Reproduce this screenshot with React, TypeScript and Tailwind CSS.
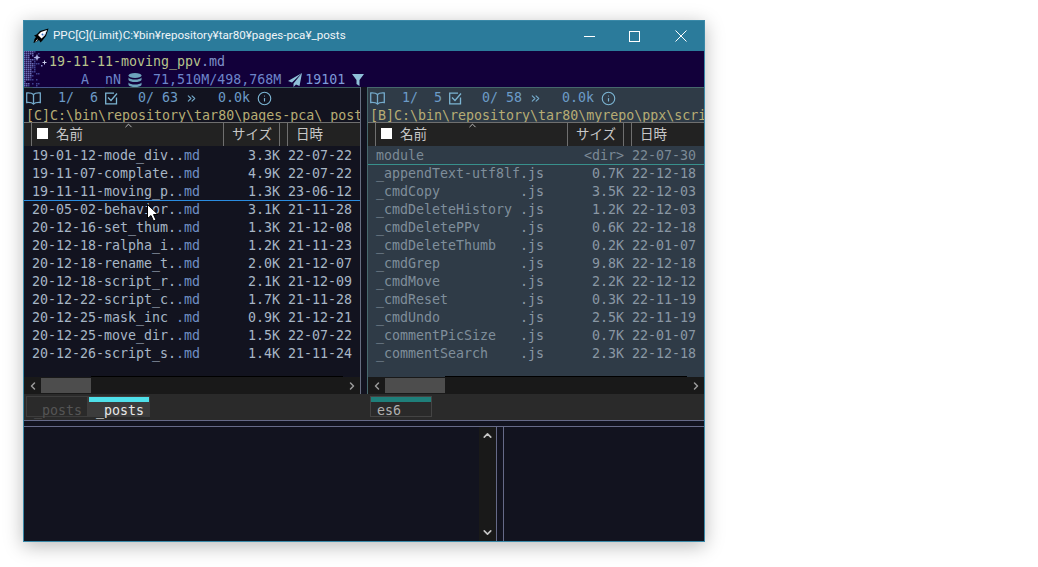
import React from "react";
import { ChevronLeft, ChevronRight, ChevronUp, ChevronDown, ChevronsRight, Info } from "lucide-react";

const mono = "font-['DejaVu_Sans_Mono','Noto_Sans_CJK_JP',monospace] text-[13.3px] leading-[18px]";

type F = [string, string, string, string];
const left: F[] = [
  ["19-01-12-mode_div..", "md", "3.3K", "22-07-22"],
  ["19-11-07-complate.", ".md", "4.9K", "22-07-22"],
  ["19-11-11-moving_p.", ".md", "1.3K", "23-06-12"],
  ["20-05-02-behavior.", ".md", "3.1K", "21-11-28"],
  ["20-12-16-set_thum.", ".md", "1.3K", "21-12-08"],
  ["20-12-18-ralpha_i.", ".md", "1.2K", "21-11-23"],
  ["20-12-18-rename_t.", ".md", "2.0K", "21-12-07"],
  ["20-12-18-script_r.", ".md", "2.1K", "21-12-09"],
  ["20-12-22-script_c.", ".md", "1.7K", "21-11-28"],
  ["20-12-25-mask_inc ", ".md", "0.9K", "21-12-21"],
  ["20-12-25-move_dir.", ".md", "1.5K", "22-07-22"],
  ["20-12-26-script_s.", ".md", "1.4K", "21-11-24"],
];
const right: F[] = [
  ["_appendText-utf8lf", ".js", "0.7K", "22-12-18"],
  ["_cmdCopy          ", ".js", "3.5K", "22-12-03"],
  ["_cmdDeleteHistory ", ".js", "1.2K", "22-12-03"],
  ["_cmdDeletePPv     ", ".js", "0.6K", "22-12-18"],
  ["_cmdDeleteThumb   ", ".js", "0.2K", "22-01-07"],
  ["_cmdGrep          ", ".js", "9.8K", "22-12-18"],
  ["_cmdMove          ", ".js", "2.2K", "22-12-12"],
  ["_cmdReset         ", ".js", "0.3K", "22-11-19"],
  ["_cmdUndo          ", ".js", "2.5K", "22-11-19"],
  ["_commentPicSize   ", ".js", "0.7K", "22-01-07"],
  ["_commentSearch    ", ".js", "2.3K", "22-12-18"],
];

function Rocket() {
  return (
    <svg width="16" height="16" viewBox="0 0 16 16" className="shrink-0">
      <path d="M15.500 .5 L7 3 L3.500 6.500 L1 7.500 L3 9 L1.500 11 L.5 15 L4 13.500 L6 12 L7.500 14.500 L9.500 12.500 L13 8Z" fill="#000" />
      <path d="M14 2 L8 4 L5 7 L8.500 10.500 L12 7Z" fill="#fff" />
      <path d="M14 2 L8.500 10.500 L12 7Z" fill="#b8d0f0" />
      <circle cx="9.500" cy="6.500" r="1" fill="#2f6fc4" />
      <path d="M2 14 L5 10.500 L4 13Z" fill="#fff" />
    </svg>
  );
}

function Dither() {
  const dots: React.ReactElement[] = [];
  for (let y = 0; y < 36; y += 2) {
    for (let x = 0; x < 20; x += 2) {
      const p = (1 - x / 16) * (1 - y / 70) * 1.5;
      const n = ((x * 7 + y * 11 + (x * y) % 7) % 10) / 10;
      if (n < p) dots.push(<rect key={x + "-" + y} x={x} y={y} width="1.500" height="1.500" fill={p > 0.6 ? "#6a6db4" : "#40428f"} />);
    }
  }
  return (
    <svg width="24" height="36" viewBox="0 0 24 36" className="absolute left-0 top-0">
      {dots}
      <path d="M13 3l1 2.500 2.500 1-2.500 1-1 2.500-1-2.500-2.500-1 2.500-1z" fill="#aeb2e4" />
      <path d="M20 9.500h1v1.500h1.500v1h-1.500v1.500h-1v-1.500h-1.500v-1h1.500z" fill="#c9cce8" />
      <rect x="17" y="14" width="1.500" height="1.500" fill="#8c8fcc" />
    </svg>
  );
}

function BookIcon() {
  return (
    <svg width="15" height="13" viewBox="0 0 15 13" fill="none" stroke="#74aacb" strokeWidth="1.300" className="ml-[2px] mr-[17px] shrink-0">
      <path d="M7.500 2.500C6 1 3.500 .8 .7 1v9.500c2.800-.2 5.300 0 6.800 1.500 1.500-1.500 4-1.700 6.800-1.500V1c-2.800-.2-5.300 0-6.800 1.500z" />
      <path d="M7.500 2.500V12" />
    </svg>
  );
}

function CheckIcon() {
  return (
    <svg width="13" height="13" viewBox="0 0 13 13" fill="none" stroke="#7cb5d3" strokeWidth="1.300" className="ml-[7px] mr-[20px] shrink-0">
      <path d="M11.500 5.500V11.900H.7V1.100H9" />
      <path d="M3 5.500l3 3 6-7" />
    </svg>
  );
}

function DbIcon() {
  return (
    <svg width="14" height="15" viewBox="0 0 14 15" fill="#6da3bc" className="ml-[7px] shrink-0">
      <ellipse cx="7" cy="2.500" rx="6.500" ry="2.500" />
      <path d="M.5 4.500C1.500 6 4 6.500 7 6.500s5.500-.5 6.500-2v2.500c-1 1.500-3.500 2-6.500 2s-5.500-.5-6.500-2z" />
      <path d="M.5 8.500C1.500 10 4 10.500 7 10.500s5.500-.5 6.500-2v2.500c-1 1.500-3.500 2-6.500 2s-5.500-.5-6.500-2z" transform="translate(0 1)" />
    </svg>
  );
}

function PlaneIcon() {
  return (
    <svg width="14" height="14" viewBox="0 0 14 14" fill="#8fc0d8" className="ml-[7px] mr-[3px] shrink-0">
      <path d="M14 0L0 8l4 1.500L14 0zM14 0L5.500 10.500v3.500l2.500-2.500 3.500 1.500z" />
    </svg>
  );
}

function FunnelIcon() {
  return (
    <svg width="12" height="12" viewBox="0 0 12 12" fill="#8fc0d8" className="ml-[7px] shrink-0">
      <path d="M0 0h12L7.500 6v6l-3-2V6z" />
    </svg>
  );
}

function Cursor() {
  return (
    <svg width="12" height="18" viewBox="0 0 12 18" className="absolute left-[123px] top-[183px]">
      <path d="M.5 .5V14.500L4 11.500L6.500 17L9 16L6.500 10.500H11Z" fill="#fff" stroke="#000" strokeWidth="1" />
    </svg>
  );
}

function Stat({ a, c, d }: { a: string; c: string; d: string }) {
  return (
    <div className={`flex h-[19px] items-center whitespace-pre pt-[1px] text-[#6c9bc7] ${mono}`}>
      <BookIcon />
      <span>{a}</span>
      <CheckIcon />
      <span>{c}</span>
      <ChevronsRight size={13} strokeWidth={2} className="ml-[7px] mr-[20px] shrink-0 text-[#74aacb]" />
      <span>{d}</span>
      <Info size={15} strokeWidth={1.8} className="ml-[7px] shrink-0 text-[#7cb5d3]" />
    </div>
  );
}

function Header() {
  return (
    <div className="relative flex h-[24px] shrink-0 border-t border-[#6f6f6f] bg-[#222222] font-['Noto_Sans_CJK_JP','Noto_Sans',sans-serif] text-[13.5px] leading-[20px] text-[#c8c8c8]">
      <div className="w-[8px] shrink-0 border-r border-[#6f6f6f]" />
      <div className="flex w-[192px] shrink-0 items-start border-r border-[#6f6f6f] pl-[5px]">
        <span className="mt-[5px] h-[11px] w-[11px] bg-white" />
        <span className="ml-[8px]">名前</span>
      </div>
      <ChevronUp size={11} className="absolute left-[99px] top-[-3px] text-[#c8c8c8]" />
      <div className="w-[56px] shrink-0 border-r border-[#6f6f6f] pl-[8px]">サイズ</div>
      <div className="w-[8px] shrink-0 border-r border-[#6f6f6f]" />
      <div className="pl-[8px]">日時</div>
    </div>
  );
}

function Row({ f, name, ext, meta, line }: { f: F; name: string; ext: string; meta: string; line?: boolean }) {
  return (
    <>
      <div className={`flex h-[18px] shrink-0 whitespace-pre pl-[8px] ${mono} ${line ? "-mb-px" : ""}`}>
        <span className={name}>{f[0]}</span>
        <span className={ext}>{f[1]}</span>
        <span className={`ml-auto w-[40px] text-right ${meta}`}>{f[2]}</span>
        <span className={`ml-[8px] mr-[8px] ${meta}`}>{f[3]}</span>
      </div>
      {line ? <div className="-my-0 h-px shrink-0 bg-[#2a8ce0]" /> : null}
    </>
  );
}

function HScroll({ thumb }: { thumb: string }) {
  return (
    <div className="flex h-[17px] shrink-0 items-center bg-[#191919] text-[#9a9a9a]">
      <div className="flex w-[17px] shrink-0 justify-center">
        <ChevronLeft size={12} strokeWidth={3} />
      </div>
      <div className={`h-[15px] bg-[#4d4d4d] ${thumb}`} />
      <ChevronRight size={12} strokeWidth={3} className="ml-auto mr-[2px] shrink-0" />
    </div>
  );
}

export default function App() {
  return (
    <div className="h-[567px] w-[1038px] overflow-hidden bg-white pl-[23px] pt-[20px]">
      <div className="relative flex h-[522px] w-[682px] flex-col border border-[#3a89a8] bg-[#12131f] shadow-[0_4px_18px_rgba(0,0,0,0.28)]">
        {/* Title bar */}
        <div className="flex h-[30px] shrink-0 items-center bg-[#2b7b9b] pl-[9px] text-white">
          <Rocket />
          <span className="ml-[4px] font-['Roboto','Noto_Sans',sans-serif] text-[11.6px] text-[#f0f5f8]">PPC[C](Limit)C:¥bin¥repository¥tar80¥pages-pca¥_posts</span>
          <div className="ml-auto flex items-center">
            <svg width="11" height="11" viewBox="0 0 11 11" stroke="#fff" fill="none" className="mr-[34px]"><path d="M0 5.500H11" /></svg>
            <svg width="11" height="11" viewBox="0 0 11 11" stroke="#fff" fill="none" className="mr-[35px]"><rect x=".5" y=".5" width="10" height="10" /></svg>
            <svg width="12" height="12" viewBox="0 0 12 12" stroke="#fff" fill="none" className="mr-[17px]"><path d="M.5 .5L11.500 11.500M11.500 .5L.5 11.500" /></svg>
          </div>
        </div>
        {/* Info */}
        <div className={`relative h-[36px] shrink-0 bg-[#12003a] pl-[25px] pt-[2px] whitespace-pre ${mono}`}>
          <Dither />
          <div className="text-[#b7c48c]">19-11-11-moving_ppv<span className="text-[#7d90c8]">.md</span></div>
          <div className="flex h-[18px] items-center text-[#6c85c9]">
            <span className="relative -ml-[16px]"><span className="text-[#4f55a8]">______</span><span className="text-[#6c85c9]">A</span><span className="text-[#4f55a8]">__</span><span className="text-[#6c85c9]">nN</span></span>
            <DbIcon />
            <span className="ml-[11px]">71,510M/498,768M</span>
            <PlaneIcon />
            <span className="text-[#7d9bd8]">19101</span>
            <FunnelIcon />
          </div>
        </div>
        {/* Panes */}
        <div className="flex h-[307px] shrink-0">
          <div className="flex w-[336px] shrink-0 flex-col overflow-hidden border-t border-[#3c5a5e] bg-[#12131f]">
            <Stat a={"1/  6"} c={"0/ 63"} d="0.0k" />
            <div className={`h-[15px] whitespace-pre pl-[2px] text-[#b7ad74] ${mono}`}>[C]C:\bin\repository\tar80\pages-pca\ post</div>
            <Header />
            <div className="flex h-[231px] flex-col pt-[1px]">
              {left.map((f, i) => (
                <Row key={f[0]} f={f} name="text-[#a7b6c6]" ext="text-[#6f8fc4]" meta="text-[#a7b6c6]" line={i === 2} />
              ))}
              <div className="flex-1" />
              <div className="ml-[67px] mr-[17px] h-px bg-black" />
            </div>
            <HScroll thumb="w-[50px]" />
          </div>
          <div className="w-[7px] shrink-0 border-l border-[#666d80] bg-[#12131f]" />
          <div className="flex min-w-0 flex-1 flex-col overflow-hidden border-l border-t border-[#47686c] bg-[#2f3b47]">
            <Stat a={"1/  5"} c={"0/ 58"} d="0.0k" />
            <div className={`h-[15px] whitespace-pre pl-[2px] text-[#b7ad74] ${mono}`}>[B]C:\bin\repository\tar80\myrepo\ppx\scri</div>
            <Header />
            <div className="flex h-[231px] flex-col pt-[1px]">
              <div className={`-mb-px flex h-[18px] shrink-0 whitespace-pre pl-[8px] text-[#7c8a96] ${mono}`}>
                <span>module</span>
                <span className="ml-auto w-[40px] text-right">&lt;dir&gt;</span>
                <span className="ml-[8px] mr-[8px]">22-07-30</span>
              </div>
              <div className="h-px shrink-0 bg-[#38908c]" />
              {right.map((f) => (
                <Row key={f[0]} f={f} name="text-[#7f8e9b]" ext="text-[#8a97a4]" meta="text-[#8a97a4]" />
              ))}
              <div className="flex-1" />
              <div className="ml-[77px] mr-[17px] h-px bg-black" />
            </div>
            <HScroll thumb="w-[60px]" />
          </div>
        </div>
        {/* Tabs */}
        <div className="flex h-[26px] shrink-0 bg-[#2a2a2a] pt-[2px]">
          <div className="flex w-[346px] shrink-0 pl-[2px]">
            <div className={`h-[21px] w-[62px] border border-[#3d3d3d] pl-[7px] pt-[5px] text-[#555555] ${mono}`}>_posts</div>
            <div className="h-[21px] w-[62px] bg-[#3c3c3c] px-[1px] pt-[1px]">
              <div className="h-[5px] bg-[#4fe0ea]" />
              <div className={`pl-[7px] text-[#e8e8e8] ${mono}`}>_posts</div>
            </div>
          </div>
          <div className="h-[21px] w-[62px] border border-[#444444]">
            <div className="h-[5px] bg-[#1f7f7a]" />
            <div className={`pl-[6px] text-[#b0b0b0] ${mono}`}>es6</div>
          </div>
        </div>
        {/* Separators */}
        <div className="h-[7px] shrink-0 border-y border-[#666a88] bg-[#12131f]" />
        {/* Bottom */}
        <div className="flex min-h-0 flex-1">
          <div className="flex-1" />
          <div className="flex w-[17px] shrink-0 flex-col items-center justify-between bg-[#191919] py-[2px] text-[#c4c4c4]">
            <ChevronUp size={13} strokeWidth={3} />
            <ChevronDown size={13} strokeWidth={3} />
          </div>
          <div className="w-[8px] shrink-0 border-x border-[#666a88]" />
          <div className="w-[200px] shrink-0" />
        </div>
        <Cursor />
      </div>
    </div>
  );
}
